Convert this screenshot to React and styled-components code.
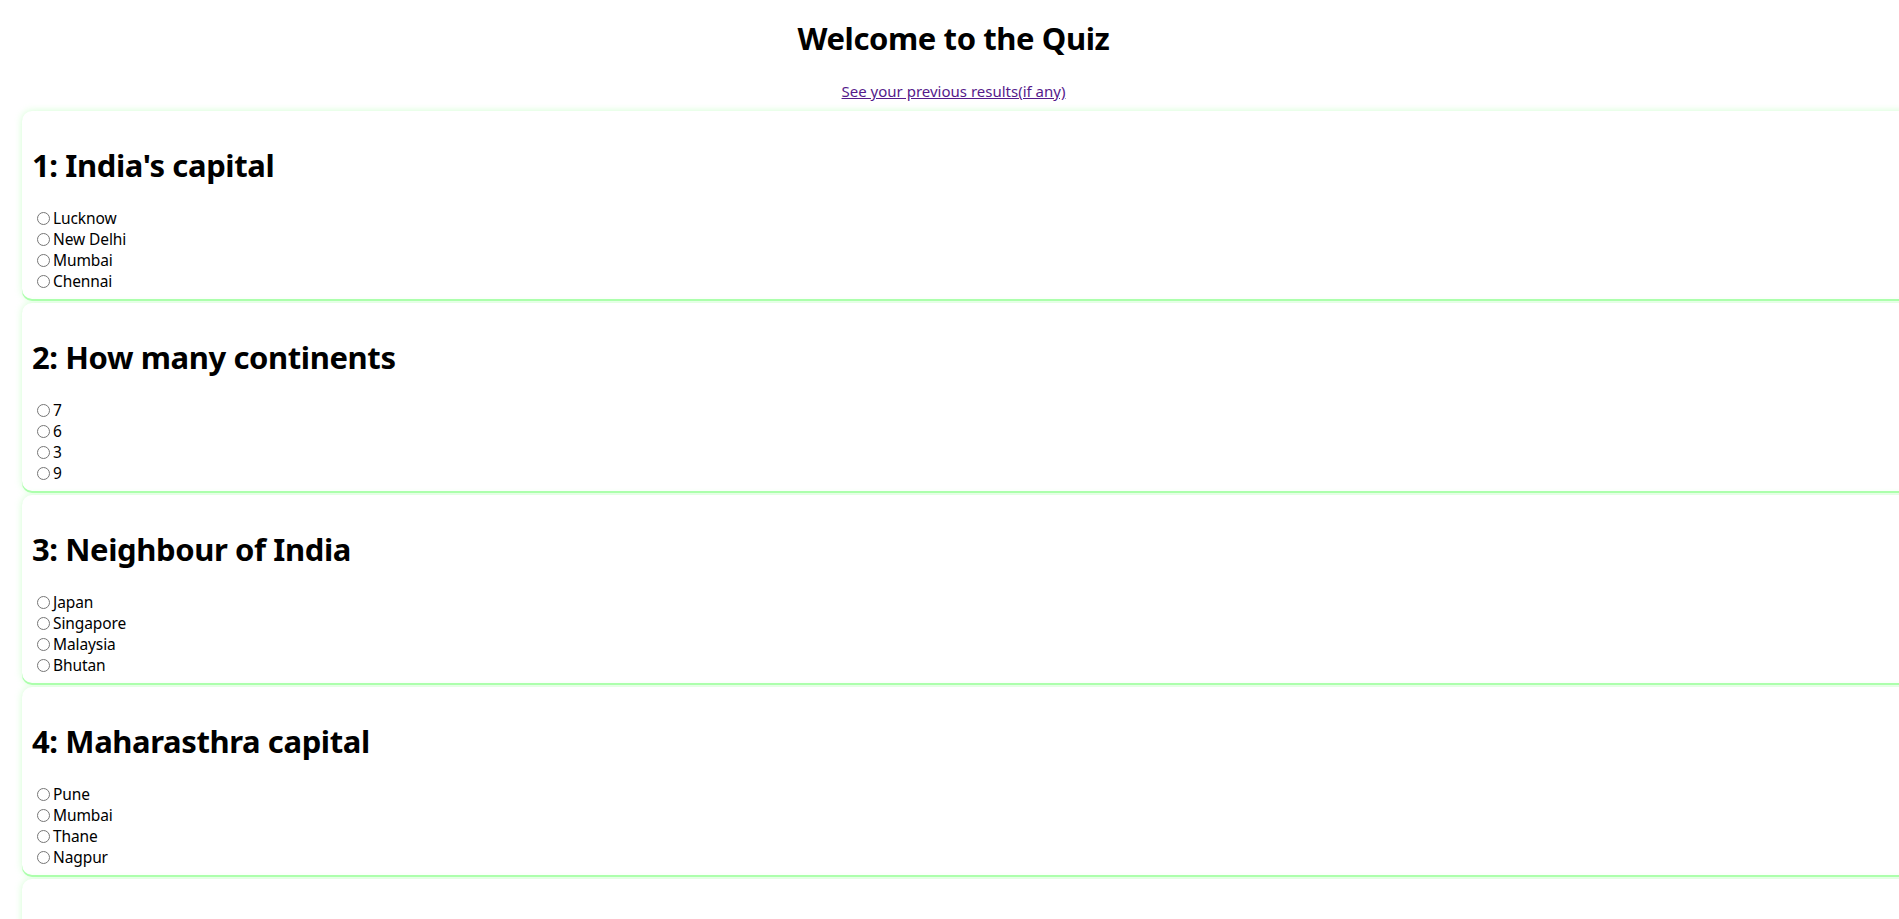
import React from "react";
import styled, { createGlobalStyle } from "styled-components";

const GlobalStyle = createGlobalStyle`
  html, body {
    margin: 0;
    padding: 0;
    background: #ffffff;
    overflow-x: hidden;
  }
  body {
    font-family: "Noto Sans", "Open Sans", sans-serif;
    color: #000000;
  }
`;

const Page = styled.div`
  padding: 0 0 0 8px;
`;

const Title = styled.h1`
  margin: 17px 0 0;
  font-size: 31px;
  letter-spacing: -0.4px;
  line-height: 42px;
  font-weight: 700;
  text-align: center;
`;

const LinkRow = styled.div`
  margin-top: 22px;
  text-align: center;
  font-size: 15px;
  line-height: 20px;
`;

const ResultsLink = styled.a`
  color: #551a8b;
  text-decoration: underline;
`;

const QuizList = styled.div`
  margin: 10px 0 0 14px;
  width: 100%;
  display: flex;
  flex-direction: column;
  gap: 4px;
`;

const Card = styled.section`
  box-sizing: border-box;
  height: 188px;
  padding: 8px 10px;
  background: #ffffff;
  border-radius: 10px;
  box-shadow: 0 2px 0 #aaffaa, 0 0 7px rgba(190, 255, 190, 0.7);
`;

const Question = styled.h2`
  margin: 25px 0 22px;
  font-size: 31px;
  letter-spacing: -0.4px;
  line-height: 42px;
  font-weight: 700;
`;

const Options = styled.div`
  display: flex;
  flex-direction: column;
`;

const OptionLabel = styled.label`
  display: flex;
  align-items: center;
  height: 21px;
  font-size: 15.5px;
  letter-spacing: -0.1px;
  line-height: 21px;
`;

const Radio = styled.input`
  width: 13px;
  height: 13px;
  margin: 0 3px 0 5px;
`;

const questions = [
  { q: "1: India's capital", options: ["Lucknow", "New Delhi", "Mumbai", "Chennai"] },
  { q: "2: How many continents", options: ["7", "6", "3", "9"] },
  { q: "3: Neighbour of India", options: ["Japan", "Singapore", "Malaysia", "Bhutan"] },
  { q: "4: Maharasthra capital", options: ["Pune", "Mumbai", "Thane", "Nagpur"] },
  { q: "5: Largest ocean", options: ["Pacific", "Atlantic", "Indian", "Arctic"] },
];

export default function App() {
  return (
    <Page>
      <GlobalStyle />
      <Title>Welcome to the Quiz</Title>
      <LinkRow>
        <ResultsLink href="#results">See your previous results(if any)</ResultsLink>
      </LinkRow>
      <QuizList>
        {questions.map((item, i) => (
          <Card key={i}>
            <Question>{item.q}</Question>
            <Options>
              {item.options.map((opt) => (
                <OptionLabel key={opt}>
                  <Radio type="radio" name={`q${i}`} value={opt} />
                  {opt}
                </OptionLabel>
              ))}
            </Options>
          </Card>
        ))}
      </QuizList>
    </Page>
  );
}
